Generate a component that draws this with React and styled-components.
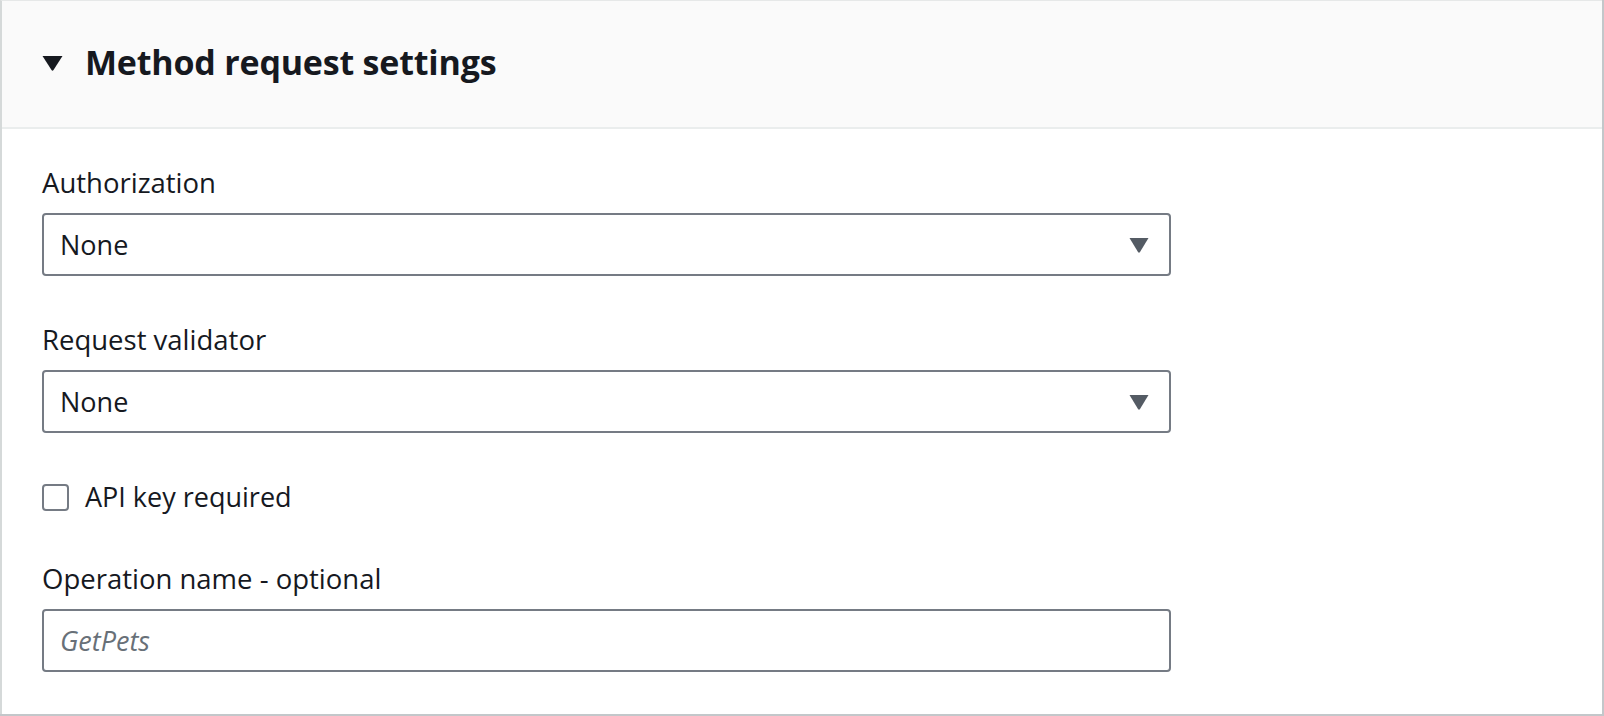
import styled, { createGlobalStyle } from "styled-components";

const GlobalStyle = createGlobalStyle`
  html, body {
    margin: 0;
    padding: 0;
    background: #ffffff;
  }
  body {
    font-family: "Open Sans", "Noto Sans", Arial, sans-serif;
    color: #16191f;
  }
`;

const Page = styled.div`
  width: 1604px;
  height: 716px;
  box-sizing: border-box;
  padding-right: 2px;
  padding-bottom: 2px;
`;

const Panel = styled.section`
  box-sizing: border-box;
  height: 100%;
  background: #ffffff;
  border-top: 1px solid #e6e8e8;
  border-left: 2px solid #d5d9d9;
  box-shadow: 1px 1px 0 1px #c3c7ca;
`;

const Header = styled.div`
  display: flex;
  align-items: center;
  gap: 22px;
  height: 128px;
  box-sizing: border-box;
  padding: 0 0 4px 40px;
  background: #fafafa;
  border-bottom: 2px solid #eaeded;
`;

const Caret = styled.svg`
  width: 21px;
  height: 16px;
  flex: none;
  margin-top: 2px;
`;

const Title = styled.h2`
  margin: 0;
  font-size: 34px;
  font-weight: 700;
  letter-spacing: -0.2px;
  color: #16191f;
`;

const Body = styled.div`
  display: flex;
  flex-direction: column;
  gap: 46px;
  padding: 36px 0 0 40px;
  width: 1129px;
`;

const Field = styled.div`
  display: flex;
  flex-direction: column;
  gap: 12px;
`;

const Label = styled.label`
  font-size: 27.5px;
  line-height: 36px;
  color: #16191f;
`;

const SelectBox = styled.div`
  display: flex;
  align-items: center;
  justify-content: space-between;
  height: 63px;
  box-sizing: border-box;
  padding: 0 20px 0 16px;
  border: 2px solid #757b84;
  border-radius: 4px;
  font-size: 27px;
  color: #16191f;
  background: #ffffff;
`;

const TextInput = styled.input`
  height: 63px;
  box-sizing: border-box;
  padding: 0 16px;
  border: 2px solid #757b84;
  border-radius: 4px;
  font-family: "Open Sans", "Noto Sans", Arial, sans-serif;
  font-size: 27px;
  color: #16191f;
  outline: none;
  &::placeholder {
    color: #687078;
    font-style: italic;
  }
`;

const CheckRow = styled.label`
  display: flex;
  align-items: center;
  gap: 16px;
  font-size: 27px;
  line-height: 36px;
  color: #16191f;
`;

const CheckSquare = styled.span`
  width: 27px;
  height: 27px;
  flex: none;
  box-sizing: border-box;
  border: 2px solid #757b84;
  border-radius: 4px;
  background: #ffffff;
`;

const DropArrow = () => (
  <svg width="20" height="16" viewBox="0 0 20 16">
    <path d="M0.5 1 H19.5 L11 15 Q10 16.5 9 15 Z" fill="#545b64" />
  </svg>
);

const Select = ({ value }) => (
  <SelectBox>
    <span>{value}</span>
    <DropArrow />
  </SelectBox>
);

export default function App() {
  return (
    <Page>
      <GlobalStyle />
      <Panel>
        <Header>
          <Caret viewBox="0 0 21 16">
            <path d="M0.5 1 H20.5 L11.5 15 Q10.5 16.5 9.5 15 Z" fill="#16191f" />
          </Caret>
          <Title>Method request settings</Title>
        </Header>
        <Body>
          <Field>
            <Label>Authorization</Label>
            <Select value="None" />
          </Field>
          <Field>
            <Label>Request validator</Label>
            <Select value="None" />
          </Field>
          <CheckRow>
            <CheckSquare />
            API key required
          </CheckRow>
          <Field>
            <Label>Operation name - optional</Label>
            <TextInput placeholder="GetPets" />
          </Field>
        </Body>
      </Panel>
    </Page>
  );
}
